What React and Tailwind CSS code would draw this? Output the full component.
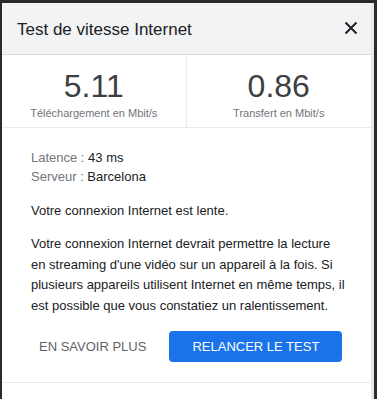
import React from 'react';

const stats = [
  { value: '5.11', label: 'Téléchargement en Mbit/s' },
  { value: '0.86', label: 'Transfert en Mbit/s' },
];

const App = () => {
  return (
    <div className="w-[377px] h-[399px] bg-[#2b2b2b] pt-[3px] pl-[2px] overflow-hidden" style={{ fontFamily: '"Liberation Sans", Arial, sans-serif' }}>
      <div className="w-[372px] h-[396px] bg-white border-r-[3px] border-[#e8e8e8]">
        {/* header */}
        <div className="h-[52px] bg-[#f1f3f4] border-b border-[#dadce0] flex items-center justify-between pl-[15px] pr-[13px]">
          <h1 className="text-[17px] text-[#202124] pt-[2px]">Test de vitesse Internet</h1>
          <svg width="14" height="14" viewBox="0 0 14 14" className="mb-[2px]">
            <path d="M1.5 1.5L12.5 12.5M12.5 1.5L1.5 12.5" stroke="#202124" strokeWidth="2" />
          </svg>
        </div>

        {/* results */}
        <div className="grid grid-cols-2 h-[73px] border-b border-[#e8eaed]">
          {stats.map((s, i) => (
            <div key={s.label} className={`flex flex-col items-center pt-[15px] ${i === 0 ? 'border-r border-[#e8eaed]' : ''}`}>
              <div className="text-[32px] leading-[32px] text-[#3c4043]">{s.value}</div>
              <div className="text-[11px] leading-[14px] text-[#70757a] mt-[4px]">{s.label}</div>
            </div>
          ))}
        </div>

        {/* details */}
        <div className="pl-[29px] pt-[20px] text-[13px] text-[#202124]">
          <div className="leading-[19px]">
            <p><span className="text-[#70757a]">Latence : </span>43 ms</p>
            <p><span className="text-[#70757a]">Serveur : </span>Barcelona</p>
          </div>
          <p className="mt-[15px] leading-[19px]">Votre connexion Internet est lente.</p>
          <p className="mt-[14px] leading-[20.5px] w-[317px]">
            Votre connexion Internet devrait permettre la lecture en streaming d'une vidéo sur un appareil à la fois. Si plusieurs appareils utilisent Internet en même temps, il est possible que vous constatiez un ralentissement.
          </p>
        </div>

        {/* actions */}
        <div className="flex items-center pl-[37px] mt-[15px] h-[31px]">
          <button className="text-[13px] text-[#5f6368] uppercase">En savoir plus</button>
          <button className="ml-[23px] w-[173px] h-[31px] rounded-[4px] bg-[#1a73e8] text-white text-[13px] uppercase">Relancer le test</button>
        </div>
        <div className="mt-[20px] border-t border-[#e8eaed]"></div>
      </div>
    </div>
  );
};

export default App;
